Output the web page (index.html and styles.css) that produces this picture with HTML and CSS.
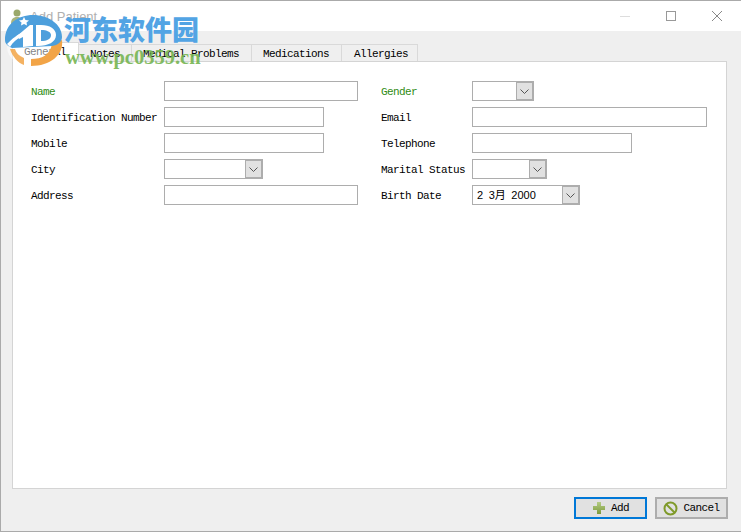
FILE: index.html
```html
<!DOCTYPE html>
<html lang="en">
<head>
    <meta charset="UTF-8">
    <title>Add Patient</title>
    <link rel="stylesheet" href="styles.css">
</head>
<body>
    <div class="window">
        <div class="titlebar">
            <svg class="app-icon" width="12" height="15" viewBox="0 0 12 15">
                <circle cx="6" cy="4" r="3.500" fill="#9aa86a"/>
                <path d="M0 15c0-5 2-7 6-7s6 2 6 7z" fill="#a8b47e"/>
            </svg>
            <div class="title">Add Patient</div>
            <div class="win-buttons">
                <svg width="46" height="31" viewBox="0 0 46 31"><path d="M18 15.500h10" stroke="#ddd" fill="none"/></svg>
                <svg width="46" height="31" viewBox="0 0 46 31"><rect x="18.500" y="10.500" width="9" height="9" stroke="#999" fill="none"/></svg>
                <svg width="46" height="31" viewBox="0 0 46 31"><path d="M18 10l10 10M28 10l-10 10" stroke="#888" fill="none"/></svg>
            </div>
        </div>

        <div class="content">
            <div class="tabs">
                <div class="tab active">General</div>
                <div class="tab">Notes</div>
                <div class="tab tab-wide">Medical Problems</div>
                <div class="tab tab-wide">Medications</div>
                <div class="tab tab-last">Allergies</div>
            </div>

            <div class="pane">
                <div class="form">
                    <div class="col col-left">
                        <div class="row">
                            <label class="required">Name</label>
                            <div class="input w-194"></div>
                        </div>
                        <div class="row">
                            <label>Identification Number</label>
                            <div class="input w-160"></div>
                        </div>
                        <div class="row">
                            <label>Mobile</label>
                            <div class="input w-160"></div>
                        </div>
                        <div class="row">
                            <label>City</label>
                            <div class="combo w-99"><span class="value"></span><span class="arrow"><svg width="9" height="5" viewBox="0 0 9 5"><path d="M.5.500l4 4 4-4" stroke="#555" fill="none"/></svg></span></div>
                        </div>
                        <div class="row">
                            <label>Address</label>
                            <div class="input w-194"></div>
                        </div>
                    </div>
                    <div class="col col-right">
                        <div class="row">
                            <label class="required">Gender</label>
                            <div class="combo w-62"><span class="value"></span><span class="arrow"><svg width="9" height="5" viewBox="0 0 9 5"><path d="M.5.500l4 4 4-4" stroke="#555" fill="none"/></svg></span></div>
                        </div>
                        <div class="row">
                            <label>Email</label>
                            <div class="input w-235"></div>
                        </div>
                        <div class="row">
                            <label>Telephone</label>
                            <div class="input w-160"></div>
                        </div>
                        <div class="row">
                            <label>Marital Status</label>
                            <div class="combo w-75"><span class="value"></span><span class="arrow"><svg width="9" height="5" viewBox="0 0 9 5"><path d="M.5.500l4 4 4-4" stroke="#555" fill="none"/></svg></span></div>
                        </div>
                        <div class="row">
                            <label>Birth Date</label>
                            <div class="combo w-108"><span class="value">2 3月 2000</span><span class="arrow"><svg width="9" height="5" viewBox="0 0 9 5"><path d="M.5.500l4 4 4-4" stroke="#555" fill="none"/></svg></span></div>
                        </div>
                    </div>
                </div>
            </div>

            <div class="actions">
                <div class="btn btn-default">
                    <svg width="14" height="14" viewBox="0 0 14 14">
                        <defs>
                            <linearGradient id="plus" x1="0" y1="0" x2="0" y2="1">
                                <stop offset="0" stop-color="#b4cc84"/>
                                <stop offset="1" stop-color="#7d9a3c"/>
                            </linearGradient>
                        </defs>
                        <path d="M5 1h4v4h4v4H9v4H5V9H1V5h4z" fill="url(#plus)"/>
                    </svg>
                    Add
                </div>
                <div class="btn">
                    <svg width="15" height="15" viewBox="0 0 15 15"><circle cx="7.500" cy="7.500" r="6" fill="none" stroke="#7f9a2a" stroke-width="2"/><path d="M3.500 3.500l8 8" stroke="#7f9a2a" stroke-width="2"/></svg>
                    Cancel
                </div>
            </div>
        </div>

        <div class="watermark">
            <svg class="wm-logo" width="62" height="58" viewBox="0 0 62 58">
                <ellipse cx="30" cy="34" rx="27" ry="20" fill="#fff" opacity=".5"/>
                <path d="M58 27C60 42 46 53 27 53L27 46C38 46 46 42 48 31Z" fill="#f2a447"/>
                <path d="M6 36C8 43 14 50 20 52L20 45C15 43 12 40 11 36Z" fill="#f2a447" opacity=".85"/>
                <path d="M1 27C1 11 14 2 29 2c15 0 29 9 29 22 0 5-4 8-10 9-12 1-28 1-40 2-4-2-7-4-7-8z" fill="#4d9fdc"/>
                <path d="M13 23L26 12h3v21l-10 1V24l-4 2z" fill="#fff"/>
                <path d="M32 12h5c9 0 15 4 15 10 0 7-8 11-18 11h-2zm5 5v11c6 0 10-2 10-6 0-3-4-5-10-5z" fill="#fff"/>
                <path d="M20 4l1.500 3 3.500.5-2.500 2 .5 3-3-1.500-3 1.500.5-3-2.500-2 3.500-.5z" fill="#fff"/>
                <path d="M3 31c6-6 10-9 16-12l-1 4c-5 3-9 6-12 11z" fill="#fff"/>
            </svg>
            <div class="wm-name">河东软件园</div>
            <div class="wm-url">www.pc0359.cn</div>
        </div>
    </div>
</body>
</html>
```

FILE: styles.css
```css
* {
    box-sizing: border-box;
}
html, body {
    margin: 0;
    padding: 0;
}
body {
    width: 741px;
    height: 532px;
    overflow: hidden;
    font-family: "Liberation Mono", "Noto Sans CJK SC", monospace;
    font-size: 11px;
    letter-spacing: -0.6px;
    color: #000;
}
.window {
    position: relative;
    width: 741px;
    height: 532px;
    display: flex;
    flex-direction: column;
    border-top: 1px solid #aaa;
    border-left: 1px solid #aaa;
    border-bottom: 1px solid #aaa;
    background-color: #efefef;
}
.titlebar {
    height: 30px;
    flex: none;
    display: flex;
    align-items: center;
    padding-left: 10px;
    background-color: #fff;
}
.title {
    margin-left: 7px;
    font-family: "Liberation Sans", sans-serif;
    font-size: 13px;
    letter-spacing: 0;
    color: #b0b0b0;
}
.win-buttons {
    margin-left: auto;
    margin-right: 1px;
    display: flex;
}
.win-buttons svg {
    display: block;
}
.content {
    flex: 1;
    display: flex;
    flex-direction: column;
    padding: 13px 13px 0 11px;
}
.tabs {
    display: flex;
    height: 17px;
    flex: none;
}
.tab {
    height: 17px;
    padding: 0 11px;
    line-height: 18px;
    background-color: #efefef;
    border: 1px solid #d9d9d9;
    border-bottom: none;
    border-left: none;
}
.tab-wide {
    padding-right: 12px;
}
.tab-last {
    padding: 0 9px 0 12px;
}
.tab.active {
    position: relative;
    z-index: 1;
    width: 67px;
    height: 20px;
    margin-top: -2px;
    background-color: #fff;
    border-left: 1px solid #d9d9d9;
    line-height: 19px;
}
.pane {
    height: 428px;
    flex: none;
    margin-right: 1px;
    background-color: #fff;
    border: 1px solid #d4d4d4;
    padding: 19px 18px 0 18px;
}
.form {
    display: flex;
}
.col {
    display: flex;
    flex-direction: column;
    gap: 6px;
}
.col-left {
    width: 350px;
}
.row {
    display: flex;
    align-items: center;
    height: 20px;
}
.row label {
    padding-top: 2px;
    flex: none;
}
.col-left label {
    width: 133px;
}
.col-right label {
    width: 91px;
}
.required {
    color: #2e8b12;
}
.input, .combo {
    height: 20px;
    background-color: #fff;
    border: 1px solid #adadad;
}
.combo {
    display: flex;
    justify-content: space-between;
}
.value {
    padding-left: 4px;
    line-height: 18px;
    font-family: "Liberation Sans", "Noto Sans CJK SC", sans-serif;
    font-size: 11px;
    letter-spacing: 0;
    word-spacing: 2.500px;
}
.arrow {
    width: 18px;
    height: 20px;
    flex: none;
    margin: -1px -1px -1px 0;
    display: flex;
    align-items: center;
    justify-content: center;
    background-color: #e1e1e1;
    border: 2px solid #adadad;
    border-left-width: 1px;
}
.w-62 { width: 62px; }
.w-75 { width: 75px; }
.w-99 { width: 99px; }
.w-108 { width: 108px; }
.w-160 { width: 160px; }
.w-194 { width: 194px; }
.w-235 { width: 235px; }
.actions {
    display: flex;
    justify-content: flex-end;
    gap: 8px;
    margin-top: 8px;
}
.btn {
    width: 73px;
    height: 22px;
    display: flex;
    align-items: center;
    justify-content: center;
    gap: 5px;
    background-color: #e1e1e1;
    border: 2px solid #adadad;
}
.btn-default {
    border-color: #0078d7;
}
.watermark {
    position: absolute;
    z-index: 2;
    left: 3px;
    top: 12px;
    width: 210px;
    height: 62px;
}
.wm-logo {
    position: absolute;
    left: 0;
    top: 0;
}
.wm-name {
    position: absolute;
    left: 60px;
    top: 0;
    font-family: "Noto Sans CJK SC", sans-serif;
    font-size: 27px;
    letter-spacing: 0;
    line-height: 32px;
    font-weight: 900;
    color: #52a4e4;
    white-space: nowrap;
}
.wm-url {
    position: absolute;
    left: 61px;
    top: 33px;
    font-family: "Liberation Serif", serif;
    font-size: 20.500px;
    letter-spacing: 0;
    line-height: 22px;
    font-weight: 700;
    color: #76b552;
    opacity: .9;
    white-space: nowrap;
}
```
